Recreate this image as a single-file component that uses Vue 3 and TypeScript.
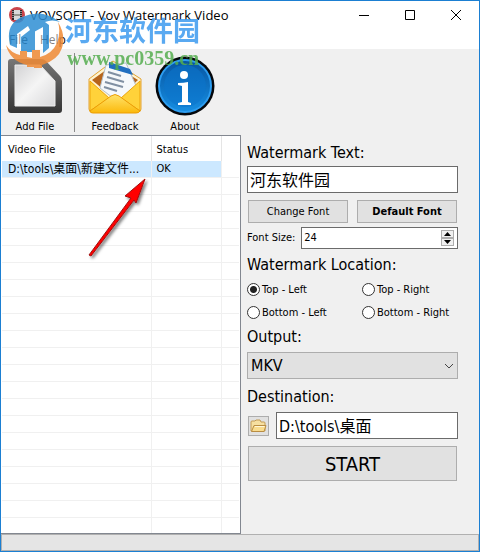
<script setup lang="ts">
import { ref } from 'vue'

interface VideoItem {
  file: string
  status: string
}

const videos: VideoItem[] = [{ file: 'D:\\tools\\桌面\\新建文件...', status: 'OK' }]
const positions: string[] = ['Top - Left', 'Top - Right', 'Bottom - Left', 'Bottom - Right']

const selectedRow = ref(0)
const watermarkText = ref('河东软件园')
const fontSize = ref(24)
const position = ref('Top - Left')
const output = ref('MKV')
const destination = ref('D:\\tools\\桌面')
</script>

<template>
  <div class="window">
    <header class="titlebar">
      <svg class="app-icon" viewBox="0 0 16 16" aria-hidden="true">
        <circle cx="8" cy="8" r="8" fill="#c9454b" />
        <rect x="3" y="3" width="10" height="10" fill="#2c2527" />
        <rect x="5" y="3" width="6" height="10" fill="#d9d9d9" />
        <path d="M4 4v1M4 6v1M4 8v1M4 10v1M12 4v1M12 6v1M12 8v1M12 10v1" stroke="#eee" />
        <path d="M5 8h6" stroke="#554" />
      </svg>
      <h1>VOVSOFT - Vov Watermark Video</h1>
      <div class="controls">
        <button type="button" aria-label="Minimize">
          <svg viewBox="0 0 10 10"><path d="M0 5.500h10" /></svg>
        </button>
        <button type="button" aria-label="Maximize">
          <svg viewBox="0 0 10 10"><path d="M.5.5h9v9h-9z" /></svg>
        </button>
        <button type="button" aria-label="Close">
          <svg viewBox="0 0 10 10"><path d="M0 0l10 10M10 0L0 10" /></svg>
        </button>
      </div>
    </header>

    <nav class="menubar">
      <button type="button">File</button>
      <button type="button">Help</button>
    </nav>

    <div class="toolbar">
      <button type="button" class="tool">
        <svg viewBox="-1 -1 60 60" aria-hidden="true">
          <defs>
            <linearGradient id="frame" x1="0" y1="0" x2="0" y2="1">
              <stop offset="0" stop-color="#777" />
              <stop offset="1" stop-color="#353535" />
            </linearGradient>
            <linearGradient id="sheet" x1="0" y1="0" x2="1" y2="1">
              <stop offset="0" stop-color="#d2d2d4" />
              <stop offset=".5" stop-color="#f5f5f5" />
              <stop offset="1" stop-color="#d8d8da" />
            </linearGradient>
          </defs>
          <path d="M5 2h30q3 0 5 2l14 15q2 2 2 5v29q0 3-3 3H5q-3 0-3-3V5q0-3 3-3z" fill="url(#frame)" />
          <path d="M9 8h25l15 16v25H9z" fill="url(#sheet)" stroke="#eee" />
        </svg>
        <span>Add File</span>
      </button>
      <span class="divider"></span>
      <button type="button" class="tool feedback">
        <svg viewBox="0 0 60 60" aria-hidden="true">
          <defs>
            <linearGradient id="gold" x1="0" y1="0" x2="0" y2="1">
              <stop offset="0" stop-color="#ffe36b" />
              <stop offset="1" stop-color="#fbb90b" />
            </linearGradient>
          </defs>
          <path d="M4 23L28 5l28 18v30q0 3-3 3H7q-3 0-3-3z" fill="#fff3cf" stroke="#e3a432" />
          <path d="M7 24L28 9l25 15-22 20z" fill="#b7651b" />
          <path d="M21 9l20-2 11 25-20 13-17-13z" fill="#f5f8fb" stroke="#b5c2ce" />
          <path d="M24 6l21 7 3 6-24-7z" fill="#216fc0" />
          <path d="M23 16l13 4M22 21l17 5M20 26l18 5M19 31l13 4" stroke="#8090a3" stroke-width="2" />
          <path d="M5 25l19 17L5 55zM55 25L36 42l19 13z" fill="#ffd23a" stroke="#eda50b" />
          <path d="M5 55l21-15q4-3 8 0l21 15q-1 2-4 2H8q-3 0-3-2z" fill="url(#gold)" stroke="#ec9d05" />
        </svg>
        <span>Feedback</span>
      </button>
      <button type="button" class="tool about">
        <svg viewBox="0 0 60 60" aria-hidden="true">
          <defs>
            <linearGradient id="info" x1="0" y1="0" x2="0" y2="1">
              <stop offset="0" stop-color="#0754a0" />
              <stop offset="1" stop-color="#168ee2" />
            </linearGradient>
          </defs>
          <circle cx="30" cy="30" r="29.500" fill="#05080c" />
          <circle cx="30" cy="30" r="26" fill="url(#info)" stroke="#2d9df0" stroke-width="2" />
          <circle cx="30" cy="30" r="21" fill="#0b74cb" opacity=".6" />
          <circle cx="29" cy="19" r="4" fill="#fff" />
          <path d="M23 27q6 0 10-1v20l3 1v2H23v-2l4-1V30l-4-1z" fill="#fff" />
        </svg>
        <span>About</span>
      </button>
    </div>

    <main class="content">
      <section class="list">
        <table>
          <colgroup>
            <col class="col-file" />
            <col class="col-status" />
            <col />
          </colgroup>
          <thead>
            <tr>
              <th scope="col">Video File</th>
              <th scope="col">Status</th>
              <td></td>
            </tr>
          </thead>
          <tbody>
            <tr v-for="(video, i) in videos" :key="i" :class="{ selected: i === selectedRow }" @click="selectedRow = i">
              <td class="path">{{ video.file }}</td>
              <td>{{ video.status }}</td>
              <td></td>
            </tr>
          </tbody>
        </table>
        <div class="grid-lines"></div>
        <svg class="arrow" viewBox="0 0 64 84" aria-hidden="true">
          <defs>
            <filter id="shade" x="-20%" y="-20%" width="150%" height="150%">
              <feDropShadow dx="2" dy="2" stdDeviation="1.500" flood-color="#000" flood-opacity=".5" />
            </filter>
          </defs>
          <path d="M57 1L37 18l6 2L1 77l2 1 43-56 2 3z" fill="#f00" stroke="#a01010" filter="url(#shade)" />
        </svg>
      </section>

      <form class="settings" @submit.prevent>
        <label class="caption" for="watermark-text">Watermark Text:</label>
        <input id="watermark-text" v-model="watermarkText" class="field" type="text" />

        <div class="font-buttons">
          <button type="button" class="btn">Change Font</button>
          <button type="button" class="btn bold">Default Font</button>
        </div>

        <div class="size-row">
          <label for="font-size">Font Size:</label>
          <div class="spin">
            <input id="font-size" v-model.number="fontSize" type="number" />
            <div class="steppers">
              <button type="button" aria-label="Increase" @click="fontSize++">
                <svg viewBox="0 0 7 4"><path d="M0 4l3.500-4L7 4z" /></svg>
              </button>
              <button type="button" aria-label="Decrease" @click="fontSize--">
                <svg viewBox="0 0 7 4"><path d="M0 0h7L3.500 4z" /></svg>
              </button>
            </div>
          </div>
        </div>

        <fieldset>
          <legend class="caption">Watermark Location:</legend>
          <div class="radios">
            <label v-for="p in positions" :key="p">
              <input v-model="position" type="radio" name="position" :value="p" />
              <span>{{ p }}</span>
            </label>
          </div>
        </fieldset>

        <label class="caption" for="output">Output:</label>
        <div class="select">
          <select id="output" v-model="output">
            <option>MKV</option>
          </select>
          <svg viewBox="0 0 10 6" aria-hidden="true"><path d="M1 1l4 4 4-4" /></svg>
        </div>

        <label class="caption destination" for="destination">Destination:</label>
        <div class="dest-row">
          <button type="button" class="btn browse" aria-label="Browse">
            <svg viewBox="0 0 17 14" aria-hidden="true">
              <path d="M1 12V3q0-1 1-1h3l1-1h4l1 2h3q1 0 1 1v8z" fill="#f6dfa0" stroke="#c19a55" />
              <path d="M1.500 12.500L4 6.500h12L14 12.500z" fill="#f9dc8e" stroke="#b98d43" />
              <path d="M5 7.500h9.500" stroke="#fff6d8" />
            </svg>
          </button>
          <input id="destination" v-model="destination" class="field" type="text" />
        </div>

        <button type="submit" class="btn start">START</button>
      </form>
    </main>

    <footer class="statusbar"></footer>

    <div class="brand">
      <svg viewBox="0 0 60 58" aria-hidden="true">
        <ellipse cx="30" cy="27" rx="27" ry="25" fill="#fff" opacity=".6" />
        <path d="M5 33Q0 12 17 5q20-9 38 5-8-3-15 0l4 3v23l-6 5V15l-9 5v20H16V25l9-7-2-4-11 8v14z" fill="#2f8fd4" />
        <path d="M24 22l6-4v20h-6z" fill="#2f8fd4" />
        <path d="M1 33q5 8 14 10v-4h7v6l5 1v-8h8v7q12-3 17-14 4-11 1-21 8 13 4 26-4 12-20 17v3h-8v-1h-7v-2Q5 49 1 33z" fill="#f08a35" />
      </svg>
      <div class="brand-text">
        <span class="brand-name">河东软件园</span>
        <span class="brand-url">www.pc0359.cn</span>
      </div>
    </div>
  </div>
</template>

<style>
body {
  margin: 0;
}
</style>

<style scoped>
.window {
  position: relative;
  display: flex;
  flex-direction: column;
  box-sizing: border-box;
  min-height: 100vh;
  border: 1px solid #1b7fd2;
  background: #f0f0f0;
  color: #000;
  font: 11px/14px "DejaVu Sans Condensed", "Noto Sans", "Noto Sans CJK SC", sans-serif;
}

button,
input,
select {
  box-sizing: border-box;
  margin: 0;
  color: inherit;
  font: inherit;
}

.titlebar {
  display: flex;
  align-items: center;
  height: 28px;
  padding-left: 8px;
  background: #fff;
}

.app-icon {
  width: 16px;
  height: 16px;
}

h1 {
  flex: 1;
  margin: 0 0 0 5px;
  font: 13px/20px "Open Sans", sans-serif;
  white-space: nowrap;
}

.controls {
  display: flex;
}

.controls button {
  display: flex;
  align-items: center;
  justify-content: center;
  width: 46px;
  height: 28px;
  padding: 0;
  border: 0;
  background: none;
}

.controls svg {
  width: 10px;
  height: 10px;
  overflow: visible;
  fill: none;
  stroke: #000;
}

.menubar {
  display: flex;
  height: 20px;
  padding-left: 2px;
  background: #fff;
}

.menubar button {
  padding: 0 6px;
  border: 0;
  background: none;
  font: 12px/22px "Open Sans", sans-serif;
}

.toolbar {
  display: flex;
  height: 86px;
  padding-left: 4px;
}

.tool {
  display: flex;
  flex-direction: column;
  align-items: center;
  width: 60px;
  padding: 7px 0 0;
  border: 0;
  background: none;
}

.tool svg {
  width: 60px;
  height: 60px;
}

.tool span {
  margin-top: 4px;
}

.divider {
  width: 1px;
  margin: 4px 10px 3px 9px;
  background: #8a8a8a;
}

.about {
  margin-left: 10px;
}

.content {
  display: grid;
  flex: 1;
  grid-template-columns: 240px 1fr;
}

.list {
  position: relative;
  display: flex;
  flex-direction: column;
  box-sizing: border-box;
  padding: 0 1px;
  border: 1px solid #828790;
  border-left: 0;
  background: #fff;
}

table {
  width: 100%;
  border-collapse: collapse;
  table-layout: fixed;
}

.col-file {
  width: 149px;
}

.col-status {
  width: 70px;
}

th,
td {
  padding: 0 0 0 5px;
  font-weight: 400;
  text-align: left;
  white-space: nowrap;
}

th:first-child,
.path {
  padding-left: 6px;
}

.path {
  font-size: 12px;
}

thead tr {
  height: 25px;
}

thead th {
  padding-top: 2px;
  border-right: 1px solid #e5e5e5;
}

tbody td {
  height: 16px;
  border-right: 1px solid #f0f0f0;
  border-bottom: 1px solid #f0f0f0;
  line-height: 16px;
}

tbody td:last-child {
  border-right: 0;
}

.selected td:not(:last-child) {
  background: #cce8ff;
}

.grid-lines {
  flex: 1;
  background:
    linear-gradient(#f0f0f0, #f0f0f0) 149px 0 / 1px 100% no-repeat,
    linear-gradient(#f0f0f0, #f0f0f0) 219px 0 / 1px 100% no-repeat,
    repeating-linear-gradient(transparent 0 16px, #f0f0f0 16px 17px);
}

.arrow {
  position: absolute;
  top: 42px;
  left: 87px;
  width: 64px;
  height: 84px;
}

.settings {
  display: flex;
  flex-direction: column;
  padding: 5px 21px 0 6px;
}

.caption {
  padding: 0;
  font-size: 16px;
  line-height: 26px;
}

.field {
  width: 100%;
  height: 27px;
  padding: 0 2px 2px;
  border: 1px solid #6b6b6b;
  background: #fff;
  font-size: 16px;
}

.btn {
  padding: 0;
  border: 1px solid #adadad;
  background: #e1e1e1;
}

.bold {
  font-weight: 700;
}

.font-buttons {
  display: grid;
  grid-template-columns: 1fr 1fr;
  gap: 9px;
  height: 23px;
  margin: 7px 1px 4px;
}

.size-row {
  display: flex;
  align-items: center;
  justify-content: space-between;
  gap: 6px;
}

.spin {
  display: flex;
  flex: 1;
  box-sizing: border-box;
  height: 22px;
  padding: 2px 3px 2px 2px;
  border: 1px solid #6b6b6b;
  background: #fff;
}

.spin input {
  flex: 1;
  min-width: 0;
  padding: 0;
  border: 0;
  outline: 0;
  background: none;
  font-size: 11px;
  appearance: textfield;
}

.spin input::-webkit-inner-spin-button {
  appearance: none;
}

.steppers {
  display: grid;
  width: 13px;
}

.steppers button {
  display: flex;
  align-items: center;
  justify-content: center;
  padding: 0;
  border: 1px solid #adadad;
  background: #f0f0f0;
}

.steppers svg {
  width: 7px;
  height: 4px;
}

fieldset {
  min-width: 0;
  margin: 3px 0 0;
  padding: 0;
  border: 0;
}

.radios {
  display: grid;
  grid-template-columns: 115px 1fr;
  grid-auto-rows: 23px;
}

.radios label {
  display: flex;
  align-items: center;
  gap: 2px;
  white-space: nowrap;
}

.radios input {
  width: 13px;
  height: 13px;
  border: 1px solid #333;
  border-radius: 50%;
  background: #fff;
  appearance: none;
}

.radios input:checked {
  background: radial-gradient(circle, #222 3px, #fff 4px);
}

.select {
  display: grid;
  align-items: center;
  margin-top: 2px;
}

.select select {
  grid-area: 1 / 1;
  width: 100%;
  height: 27px;
  padding: 0 3px;
  border: 1px solid #adadad;
  border-radius: 0;
  background: #e1e1e1;
  font-size: 16px;
  appearance: none;
}

.select svg {
  grid-area: 1 / 1;
  justify-self: end;
  width: 10px;
  height: 6px;
  margin-right: 4px;
  fill: none;
  stroke: #444;
  pointer-events: none;
}

.destination {
  margin-top: 5px;
}

.dest-row {
  display: flex;
  align-items: center;
  gap: 7px;
  margin-top: 2px;
  padding-left: 1px;
}

.browse {
  display: flex;
  flex: none;
  align-items: center;
  justify-content: center;
  width: 21px;
  height: 20px;
}

.browse svg {
  width: 17px;
  height: 14px;
}

.start {
  height: 35px;
  margin: 7px 1px 0;
  font-size: 20px;
}

.statusbar {
  height: 17px;
  box-sizing: border-box;
  border: 1px solid #b0b0b0;
  background: #e5e5e5;
}

.brand {
  position: absolute;
  top: 11px;
  left: 4px;
  display: flex;
  opacity: 0.85;
  pointer-events: none;
}

.brand svg {
  width: 60px;
  height: 58px;
}

.brand-text {
  display: flex;
  flex-direction: column;
}

.brand-name {
  color: #3d9bef;
  font: 700 27px/36px "Noto Sans CJK SC", sans-serif;
}

.brand-url {
  margin-left: 2px;
  color: #55ae50;
  font: 700 20px/20px "Liberation Serif", serif;
}
</style>
